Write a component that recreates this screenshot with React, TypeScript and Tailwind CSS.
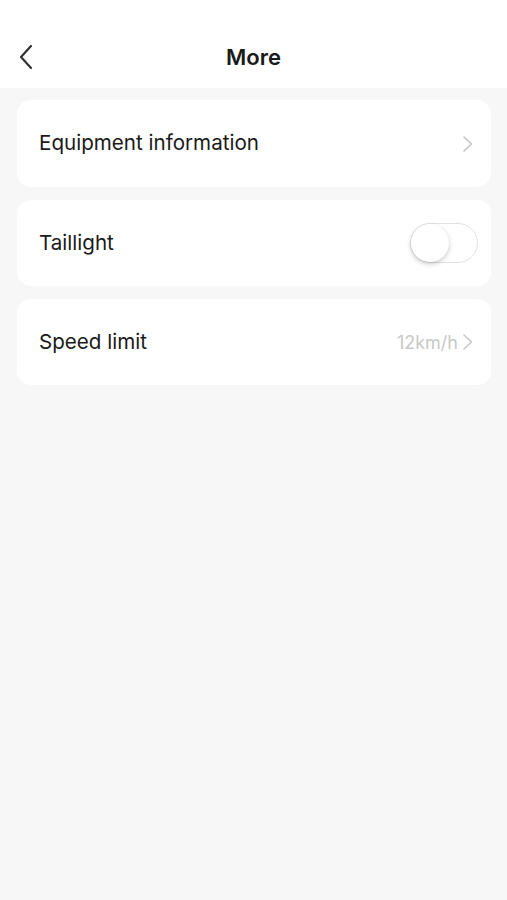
import { useState } from 'react'

function Chevron({ className = '' }: { className?: string }) {
  return (
    <svg width="12" height="18" viewBox="0 0 12 18" fill="none" className={className}>
      <path d="M2 2l7.5 7L2 16" stroke="currentColor" strokeWidth="1.6" strokeLinecap="round" strokeLinejoin="round" />
    </svg>
  )
}

export default function App() {
  const [taillight, setTaillight] = useState(false)

  return (
    <div className="min-h-[900px] bg-[#f7f7f7] font-['Inter',sans-serif] text-[#1a1a1a]">
      {/* Header */}
      <div className="h-[88px] bg-white pt-[30px]">
        <div className="relative flex h-[54px] items-center justify-center">
          <button className="absolute left-[17px] top-[14px] text-[#333]">
            <svg width="18" height="26" viewBox="0 0 18 26" fill="none">
              <path d="M14 2L4 13l10 11" stroke="currentColor" strokeWidth="2.2" strokeLinecap="round" strokeLinejoin="round" />
            </svg>
          </button>
          <h1 className="text-[22px] font-semibold">More</h1>
        </div>
      </div>

      {/* List */}
      <div className="flex flex-col gap-[13px] pl-[17px] pr-[16px] pt-[12px]">
        <div className="flex h-[87px] items-center justify-between rounded-[14px] bg-white pl-[22px] pr-[17px]">
          <span className="text-[20.6px]">Equipment information</span>
          <Chevron className="text-[#c4c4c4]" />
        </div>

        <div className="flex h-[86px] items-center justify-between rounded-[14px] bg-white pl-[22px] pr-[13px]">
          <span className="text-[20.6px]">Taillight</span>
          <button
            onClick={() => setTaillight(!taillight)}
            className={`relative h-[40px] w-[68px] rounded-full border border-[#e2e2e2] ${taillight ? 'bg-[#3cc36b]' : 'bg-white'}`}
          >
            <span
              className={`absolute top-[0px] h-[38px] w-[38px] rounded-full bg-white shadow-[0_2px_5px_rgba(0,0,0,0.22)] ${taillight ? 'left-[28px]' : 'left-[0px]'}`}
            />
          </button>
        </div>

        <div className="flex h-[86px] items-center justify-between rounded-[14px] bg-white pl-[22px] pr-[17px]">
          <span className="text-[20.6px]">Speed limit</span>
          <div className="flex items-center gap-[4px] text-[#c8c8c8]">
            <span className="text-[18px]">12km/h</span>
            <Chevron />
          </div>
        </div>
      </div>
    </div>
  )
}
